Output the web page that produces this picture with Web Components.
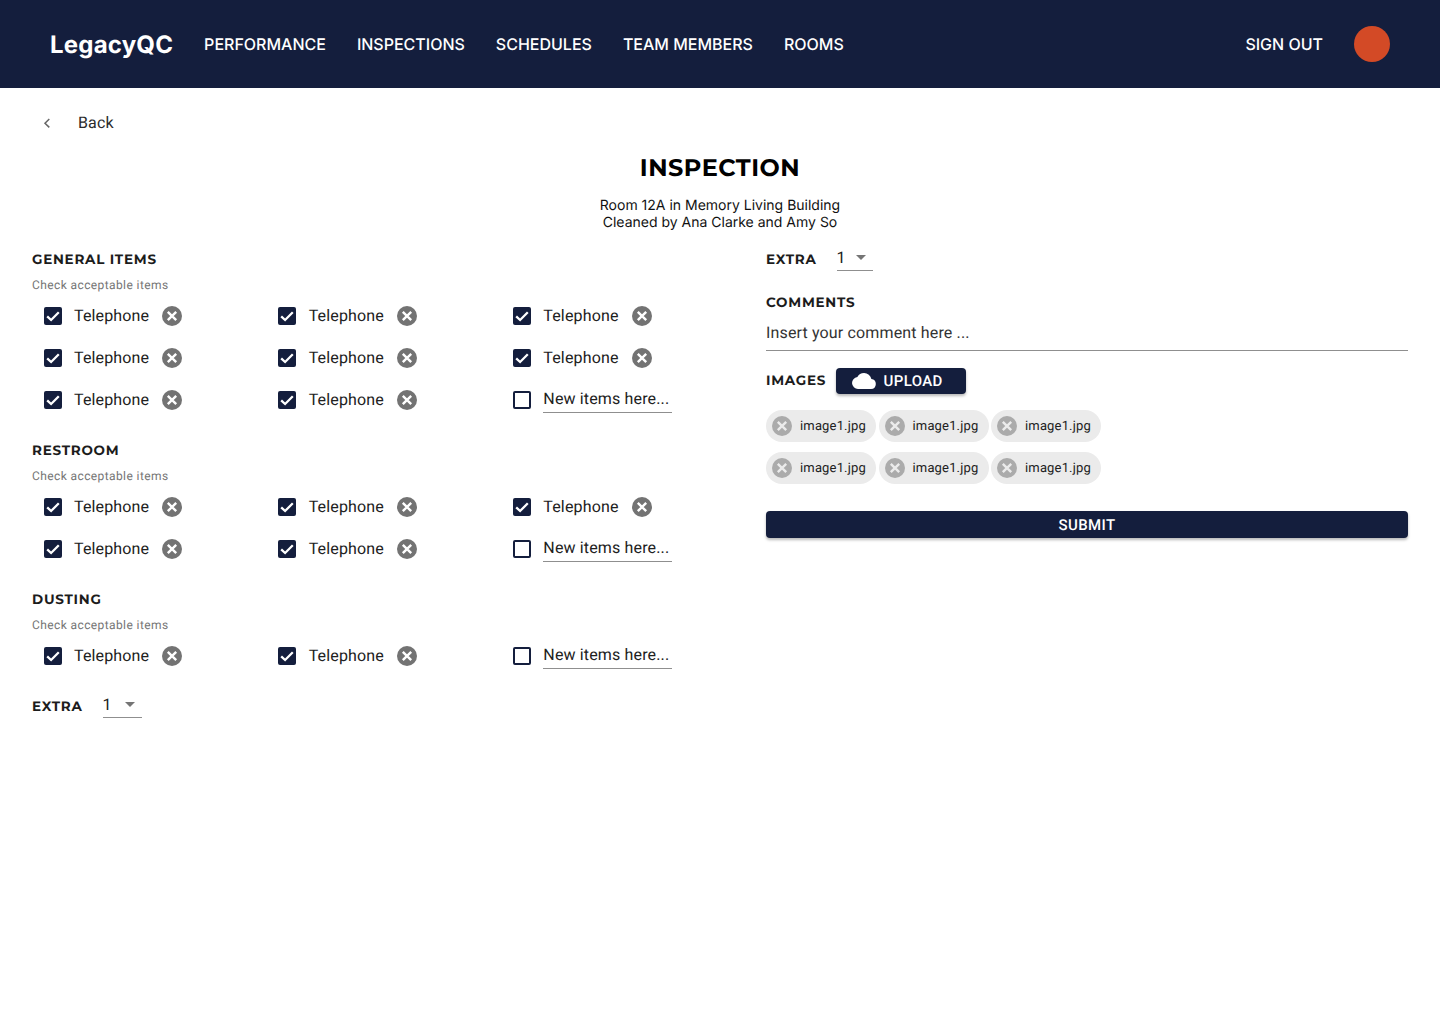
<!DOCTYPE html>
<html lang="en">
<head>
<meta charset="utf-8">
<title>LegacyQC - Inspection</title>
<style>
html, body { margin: 0; padding: 0; background: #fff; }
body { font-family: Roboto, "Liberation Sans", sans-serif; color: #212121; text-rendering: geometricPrecision; }
</style>
</head>
<body>
<app-header></app-header>
<inspection-page>
    <inspection-section slot="left" heading="General items">
        <check-item></check-item><check-item></check-item><check-item></check-item>
        <check-item></check-item><check-item></check-item><check-item></check-item>
        <check-item></check-item><check-item></check-item><new-item></new-item>
    </inspection-section>
    <inspection-section slot="left" heading="Restroom">
        <check-item></check-item><check-item></check-item><check-item></check-item>
        <check-item></check-item><check-item></check-item><new-item></new-item>
    </inspection-section>
    <inspection-section slot="left" heading="Dusting">
        <check-item></check-item><check-item></check-item><new-item></new-item>
    </inspection-section>
    <extra-select slot="left" style="--gap: 20px; --select-width: 39px; --arrow-gap: 13px; margin-top: -5px"></extra-select>
    <inspection-details slot="right"></inspection-details>
</inspection-page>

<script>
const heading = `font-family: Montserrat, Inter, "Liberation Sans", sans-serif; font-weight: 700; font-size: 13.5px; letter-spacing: .75px; text-transform: uppercase; color: #1c1c1c;`;
const removeIcon = `<svg viewBox="0 0 20 20" width="20" height="20"><circle cx="10" cy="10" r="10" fill="currentColor"/><path d="M5.8 5.8l8.4 8.4M14.2 5.8l-8.4 8.4" stroke="var(--x, #fff)" stroke-width="2.4" fill="none"/></svg>`;

class AppHeader extends HTMLElement {
    constructor() {
        super();
        var shadow = this.attachShadow({mode: 'open'});
        shadow.innerHTML = `
        <style>
            :host { display: flex; align-items: center; height: 88px; background: #141e3d; color: #fff; padding: 0 50px; font-family: Inter, "Liberation Sans", sans-serif; }
            .logo { font-size: 24px; font-weight: 700; margin-right: 31px; letter-spacing: .2px; }
            nav { display: flex; gap: 31px; flex: 1; }
            a { font-size: 16px; font-weight: 500; line-height: 20px; margin-bottom: 1px; }
            .avatar { width: 36px; height: 36px; border-radius: 50%; background: #d34a26; margin-left: 31px; }
        </style>
        <span class="logo">LegacyQC</span>
        <nav><a>PERFORMANCE</a><a>INSPECTIONS</a><a>SCHEDULES</a><a>TEAM MEMBERS</a><a>ROOMS</a></nav>
        <a>SIGN OUT</a>
        <span class="avatar"></span>
        `;
    }
}
customElements.define('app-header', AppHeader);

class InspectionPage extends HTMLElement {
    constructor() {
        super();
        var shadow = this.attachShadow({mode: 'open'});
        shadow.innerHTML = `
        <style>
            :host { display: block; padding: 0 32px; }
            .back { display: flex; align-items: center; height: 24px; padding-top: 22px; font-size: 16px; letter-spacing: .15px; color: #2b2b2b; }
            .back svg { margin: 0 25px 0 9px; }
            h1 { margin: 0; padding-top: 21px; text-align: center; font: 700 24px/28px Montserrat, Inter, "Liberation Sans", sans-serif; letter-spacing: .5px; color: #000; }
            p { margin: 0; padding-top: 14px; text-align: center; font-family: Inter, "Liberation Sans", sans-serif; font-size: 14px; line-height: 17px; color: #111; }
            .cols { display: grid; grid-template-columns: 704px 642px; column-gap: 30px; padding-top: 18px; }
        </style>
        <div class="back"><svg width="12" height="12" viewBox="0 0 12 12" style="overflow:visible"><path d="M8.3 3L4 7.2l4.3 4.2" fill="none" stroke="#666" stroke-width="1.5"/></svg><span>Back</span></div>
        <h1>INSPECTION</h1>
        <p>Room 12A in Memory Living Building<br>Cleaned by Ana Clarke and Amy So</p>
        <div class="cols">
            <div class="left"><slot name="left"></slot></div>
            <div class="right"><slot name="right"></slot></div>
        </div>
        `;
    }
}
customElements.define('inspection-page', InspectionPage);

class InspectionSection extends HTMLElement {
    constructor() {
        super();
        var shadow = this.attachShadow({mode: 'open'});
        shadow.innerHTML = `
        <style>
            :host { display: block; margin-bottom: 20px; }
            h2 { margin: 1px 0 0; line-height: 20px; ${heading} }
            small { display: block; margin-top: 6px; font-size: 12px; line-height: 18px; letter-spacing: .4px; color: #757575; }
            .grid { display: grid; grid-template-columns: repeat(3, 234.67px); grid-auto-rows: 42px; margin-top: 1px; }
        </style>
        <h2></h2>
        <small>Check acceptable items</small>
        <div class="grid"><slot></slot></div>
        `;
        shadow.querySelector('h2').textContent = this.getAttribute('heading');
    }
}
customElements.define('inspection-section', InspectionSection);

class CheckItem extends HTMLElement {
    constructor() {
        super();
        var shadow = this.attachShadow({mode: 'open'});
        shadow.innerHTML = `
        <style>
            :host { display: flex; align-items: center; padding-left: 11.5px; font-size: 16px; letter-spacing: .15px; color: #212121; }
            svg { display: block; flex: none; }
            .label { margin: 0 13px 2px 12.5px; }
            .remove { color: #737373; height: 20px; }
        </style>
        <svg width="18" height="18" viewBox="0 0 18 18"><rect width="18" height="18" rx="2" fill="#141e3d"/><path d="M3.2 9.3l3.9 3.7 7.7-7.8" fill="none" stroke="#fff" stroke-width="2.3"/></svg>
        <span class="label">Telephone</span>
        <span class="remove">${removeIcon}</span>
        `;
    }
}
customElements.define('check-item', CheckItem);

class NewItem extends HTMLElement {
    constructor() {
        super();
        var shadow = this.attachShadow({mode: 'open'});
        shadow.innerHTML = `
        <style>
            :host { display: flex; align-items: center; padding-left: 11.5px; font-size: 16px; letter-spacing: .15px; color: #212121; }
            svg { display: block; flex: none; }
            .field { margin-left: 12.5px; width: 128.5px; height: 25px; line-height: 22px; border-bottom: 1px solid #8f8f8f; margin-top: 1px; box-sizing: border-box; }
        </style>
        <svg width="18" height="18" viewBox="0 0 18 18"><rect x="1" y="1" width="16" height="16" rx="1" fill="#fff" stroke="#141e3d" stroke-width="2"/></svg>
        <span class="field">New items here...</span>
        `;
    }
}
customElements.define('new-item', NewItem);

class ExtraSelect extends HTMLElement {
    constructor() {
        super();
        var shadow = this.attachShadow({mode: 'open'});
        shadow.innerHTML = `
        <style>
            :host { display: flex; align-items: center; height: 26px; }
            b { ${heading} line-height: 20px; padding-top: 3px; }
            .select { display: flex; align-items: center; box-sizing: border-box; width: var(--select-width, 36px); height: 26px; margin-left: var(--gap, 20px); border-bottom: 1px solid #8f8f8f; font-size: 16px; color: #212121; }
            svg { margin-left: var(--arrow-gap, 10px); }
        </style>
        <b>Extra</b>
        <div class="select"><span>1</span><svg width="10" height="5" viewBox="0 0 10 5"><path d="M0 0h10L5 5z" fill="#757575"/></svg></div>
        `;
    }
}
customElements.define('extra-select', ExtraSelect);

class FileChip extends HTMLElement {
    constructor() {
        super();
        var shadow = this.attachShadow({mode: 'open'});
        shadow.innerHTML = `
        <style>
            :host { display: inline-flex; align-items: center; box-sizing: border-box; width: 110px; height: 32px; border-radius: 16px; background: #ebebeb; padding-left: 6px; font-size: 13px; letter-spacing: .16px; color: #212121; --x: #ebebeb; }
            span { color: #ababab; height: 20px; margin-right: 8px; }
        </style>
        <span>${removeIcon}</span><slot></slot>
        `;
    }
}
customElements.define('file-chip', FileChip);

class PrimaryButton extends HTMLElement {
    constructor() {
        super();
        var shadow = this.attachShadow({mode: 'open'});
        shadow.innerHTML = `
        <style>
            :host { display: flex; align-items: center; justify-content: center; box-sizing: border-box; height: 26px; border-radius: 4px; background: #141e3d; color: #fff; font-size: 15px; font-weight: 500; letter-spacing: .35px; box-shadow: 0 2px 3px rgba(0,0,0,.28); }
        </style>
        <slot></slot>
        `;
    }
}
customElements.define('primary-button', PrimaryButton);

class InspectionDetails extends HTMLElement {
    constructor() {
        super();
        var shadow = this.attachShadow({mode: 'open'});
        shadow.innerHTML = `
        <style>
            :host { display: block; }
            extra-select { margin-top: -4px; }
            h2 { margin: 22px 0 0; line-height: 20px; ${heading} }
            .comment { height: 28px; margin-top: 6px; line-height: 28px; font-size: 16px; letter-spacing: .15px; color: #333; border-bottom: 1px solid #8f8f8f; padding-bottom: 3px; }
            .images { display: flex; align-items: center; gap: 10px; margin-top: 17px; }
            .images b { ${heading} }
            .upload { width: 130px; padding-right: 4px; }
            .upload span { display: flex; align-items: center; gap: 8px; margin-left: -4px; }
            .upload svg { display: block; }
            .chips { display: grid; grid-template-columns: repeat(3, 110px); column-gap: 2.5px; row-gap: 10px; margin-top: 16px; }
            .submit { margin-top: 27px; height: 27px; }
        </style>
        <extra-select></extra-select>
        <h2>Comments</h2>
        <div class="comment">Insert your comment here ...</div>
        <div class="images">
            <b>Images</b>
            <primary-button class="upload">
                <span><svg width="24" height="16" viewBox="0 0 24 16"><path d="M19.4 6.04A7.49 7.49 0 0 0 12 0a7.5 7.5 0 0 0-6.65 4.04A6 6 0 0 0 6 16h13a5 5 0 0 0 .4-9.96z" fill="#fff"/></svg>UPLOAD</span>
            </primary-button>
        </div>
        <div class="chips">
            <file-chip>image1.jpg</file-chip><file-chip>image1.jpg</file-chip><file-chip>image1.jpg</file-chip>
            <file-chip>image1.jpg</file-chip><file-chip>image1.jpg</file-chip><file-chip>image1.jpg</file-chip>
        </div>
        <primary-button class="submit">SUBMIT</primary-button>
        `;
    }
}
customElements.define('inspection-details', InspectionDetails);
</script>
</body>
</html>
